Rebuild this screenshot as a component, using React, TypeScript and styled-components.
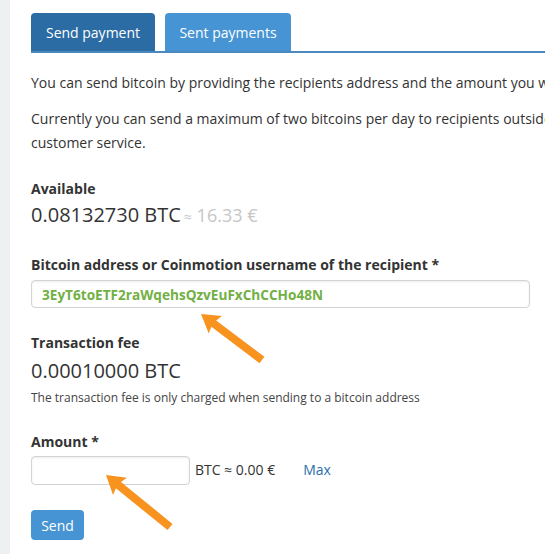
import React from "react";
import styled, { createGlobalStyle } from "styled-components";

const GlobalStyle = createGlobalStyle`
  html, body {
    margin: 0;
    padding: 0;
    background: #ffffff;
    overflow: hidden;
  }
  body {
    font-family: "Open Sans", "Liberation Sans", sans-serif;
    color: #333333;
  }
`;

const Page = styled.div`
  display: flex;
  width: 545px;
  height: 554px;
  overflow: hidden;
  position: relative;
`;

const SideStrip = styled.div`
  width: 10px;
  flex: none;
  background-color: #eef1f2;
`;

const Main = styled.main`
  flex: none;
  width: 900px;
  padding-left: 21px;
  box-sizing: border-box;
`;

const TabBar = styled.nav`
  display: flex;
  gap: 10px;
  padding-top: 13px;
  border-bottom: 2px solid #4a88bd;
`;

const Tab = styled.div<{ $active?: boolean; $width: number }>`
  width: ${(p) => p.$width}px;
  height: 38px;
  display: flex;
  align-items: center;
  justify-content: center;
  border-radius: 4px 4px 0 0;
  background-color: ${(p) => (p.$active ? "#2c6ca5" : "#4694d4")};
  color: #ffffff;
  font-size: 14px;
`;

const Paragraph = styled.p<{ $top: number }>`
  margin: ${(p) => p.$top}px 0 0;
  font-size: 14px;
  line-height: 24px;
  white-space: nowrap;
`;

const Label = styled.div<{ $top: number }>`
  margin-top: ${(p) => p.$top}px;
  font-size: 14px;
  line-height: 20px;
  font-weight: 700;
`;

const BigValue = styled.div<{ $top: number }>`
  margin-top: ${(p) => p.$top}px;
  font-size: 20px;
  line-height: 26px;
  color: #333333;
`;

const Approx = styled.span`
  color: #c6c6c6;
  font-size: 18px;
  margin-left: 3px;
  .sym {
    font-size: 14px;
  }
`;

const Note = styled.div`
  margin-top: 5px;
  font-size: 12px;
  line-height: 18px;
  color: #444444;
`;

const TextInput = styled.div<{ $top: number; $width: number; $height: number }>`
  margin-top: ${(p) => p.$top}px;
  width: ${(p) => p.$width}px;
  height: ${(p) => p.$height}px;
  box-sizing: border-box;
  border: 1px solid #d3d3d3;
  border-radius: 4px;
  box-shadow: inset 0 1px 2px rgba(0, 0, 0, 0.08);
  display: flex;
  align-items: center;
  padding-left: 10px;
`;

const Address = styled.span`
  color: #72b043;
  font-weight: 700;
  font-size: 13.6px;
`;

const AmountRow = styled.div`
  display: flex;
  align-items: center;
  margin-top: 4px;
`;

const Suffix = styled.span`
  font-size: 14px;
  line-height: 22px;
  margin-left: 5px;
  margin-top: -2px;
`;

const MaxLink = styled.a`
  font-size: 14px;
  line-height: 22px;
  color: #2b6fab;
  margin-left: 28px;
  margin-top: -2px;
  text-decoration: none;
`;

const SendButton = styled.button`
  margin-top: 25px;
  width: 53px;
  height: 30px;
  border: none;
  border-radius: 4px;
  background-color: #4694d4;
  color: #ffffff;
  font-family: inherit;
  font-size: 14px;
  padding: 0;
`;

const ArrowSvg = styled.svg`
  position: absolute;
  overflow: visible;
`;

const Arrow = ({ x1, y1, x2, y2 }: { x1: number; y1: number; x2: number; y2: number }) => {
  const angle = (Math.atan2(y1 - y2, x1 - x2) * 180) / Math.PI;
  const len = Math.hypot(x1 - x2, y1 - y2);
  return (
    <ArrowSvg width="1" height="1" style={{ left: x2, top: y2 }}>
      <g transform={`rotate(${angle})`} fill="#f7931e">
        <polygon points={`0,0 18,-11 16,-4 ${len},-4 ${len},4 16,4 18,11`} />
      </g>
    </ArrowSvg>
  );
};

export default function App() {
  return (
    <Page>
      <GlobalStyle />
      <SideStrip />
      <Main>
        <TabBar>
          <Tab $active $width={124}>Send payment</Tab>
          <Tab $width={126}>Sent payments</Tab>
        </TabBar>

        <Paragraph $top={18}>
          You can send bitcoin by providing the recipients address and the amount you want to send.
        </Paragraph>
        <Paragraph $top={12}>
          Currently you can send a maximum of two bitcoins per day to recipients outside Coinmotion. If you need to send more, please contact our
          <br />
          customer service.
        </Paragraph>

        <Label $top={24}>Available</Label>
        <BigValue $top={3}>
          0.08132730 BTC
          <Approx>
            <span className="sym">≈</span> 16.33 €
          </Approx>
        </BigValue>

        <Label $top={25}>Bitcoin address or Coinmotion username of the recipient *</Label>
        <TextInput $top={5} $width={499} $height={28}>
          <Address>3EyT6toETF2raWqehsQzvEuFxChCCHo48N</Address>
        </TextInput>

        <Label $top={25}>Transaction fee</Label>
        <BigValue $top={5}>0.00010000 BTC</BigValue>
        <Note>The transaction fee is only charged when sending to a bitcoin address</Note>

        <Label $top={25}>Amount *</Label>
        <AmountRow>
          <TextInput $top={0} $width={159} $height={29} />
          <Suffix>BTC ≈ 0.00 €</Suffix>
          <MaxLink>Max</MaxLink>
        </AmountRow>

        <SendButton>Send</SendButton>
      </Main>

      <Arrow x1={262} y1={360} x2={201} y2={314} />
      <Arrow x1={170} y1={527} x2={106} y2={475} />
    </Page>
  );
}
